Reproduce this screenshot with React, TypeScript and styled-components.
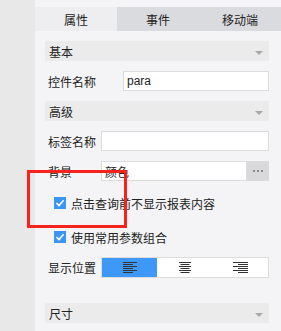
import React, { useState } from 'react';
import styled, { createGlobalStyle } from 'styled-components';

const GlobalStyle = createGlobalStyle`
    html, body {
        margin: 0;
        padding: 0;
        background: #f4f4f6;
    }
    body {
        font-family: "Noto Sans CJK SC", "Liberation Sans", sans-serif;
        font-size: 12px;
        color: #333;
    }
`;

const Page = styled.div`
    position: relative;
    display: flex;
    width: 281px;
    height: 331px;
    overflow: hidden;
`;

const SideStrip = styled.div`
    width: 35px;
    flex: none;
    background: #e8e8e8;
`;

const Panel = styled.div`
    flex: none;
    width: 246px;
    min-width: 0;
    display: flex;
    flex-direction: column;
    padding-top: 7px;
    background: #f4f4f6;
`;

const Tabs = styled.div`
    display: grid;
    grid-template-columns: repeat(3, 1fr);
    height: 24px;
    background: #dadbde;
`;

const Tab = styled.div<{ $active?: boolean }>`
    display: flex;
    align-items: center;
    justify-content: center;
    font-size: 12px;
    color: #222;
    background: ${(p) => (p.$active ? '#eeeef0' : 'transparent')};
    cursor: pointer;
`;

const Content = styled.div`
    display: flex;
    flex-direction: column;
    padding: 0 12px 0 10px;
`;

const SectionHeader = styled.div<{ $top: number }>`
    display: flex;
    align-items: center;
    justify-content: space-between;
    height: 20px;
    margin-top: ${(p) => p.$top}px;
    padding: 0 6px 0 4px;
    background: #ebebeb;
    font-size: 12px;
    color: #222;
`;

const Caret = styled.span`
    width: 0;
    height: 0;
    border-left: 4px solid transparent;
    border-right: 4px solid transparent;
    border-top: 4px solid #a9a9a9;
    margin-top: 3px;
`;

const Row = styled.div<{ $top: number; $label: number }>`
    display: flex;
    align-items: center;
    height: 20px;
    margin-top: ${(p) => p.$top}px;
    & > label {
        flex: none;
        width: ${(p) => p.$label}px;
        padding-left: 3px;
        box-sizing: border-box;
        color: #222;
        white-space: nowrap;
    }
`;

const TextInput = styled.input`
    flex: 1;
    width: 0;
    min-width: 0;
    height: 20px;
    box-sizing: border-box;
    border: 1px solid #dcdcdc;
    background: #fff;
    padding: 0 3px;
    font-family: "Liberation Sans", "Noto Sans CJK SC", sans-serif;
    font-size: 12px;
    color: #222;
    outline: none;
`;

const MoreButton = styled.button`
    flex: none;
    width: 22px;
    height: 20px;
    border: none;
    background: #d9d9db;
    padding: 0;
    display: flex;
    align-items: center;
    justify-content: center;
    gap: 2px;
    & > i {
        width: 2px;
        height: 2px;
        background: #8a8a8a;
    }
`;

const CheckRow = styled.label<{ $top: number }>`
    display: flex;
    align-items: center;
    gap: 5px;
    height: 20px;
    margin-top: ${(p) => p.$top}px;
    padding-left: 9px;
    color: #222;
    cursor: pointer;
`;

const Box = styled.span<{ $on: boolean }>`
    width: 12px;
    height: 12px;
    flex: none;
    background: ${(p) => (p.$on ? '#3b95f5' : '#fff')};
    border: ${(p) => (p.$on ? 'none' : '1px solid #bbb')};
    box-sizing: border-box;
    display: flex;
    align-items: center;
    justify-content: center;
`;

const Segments = styled.div`
    flex: 1;
    min-width: 0;
    display: grid;
    grid-template-columns: repeat(3, 1fr);
    height: 21px;
    box-sizing: border-box;
    border: 1px solid #dcdcdc;
    background: #fff;
`;

const Segment = styled.div<{ $active?: boolean }>`
    display: flex;
    align-items: center;
    justify-content: center;
    background: ${(p) => (p.$active ? '#3d98f8' : '#fff')};
    cursor: pointer;
`;

const Frame = styled.div`
    position: absolute;
    left: 27px;
    top: 170px;
    width: 100px;
    height: 58px;
    box-sizing: border-box;
    border: 3px solid #f5231c;
    pointer-events: none;
`;

function Check({ on }: { on: boolean }) {
    return (
        <Box $on={on}>
            {on && (
                <svg width="10" height="10" viewBox="0 0 10 10">
                    <path d="M1.5 5.2 L4 7.6 L8.6 2.2" fill="none" stroke="#fff" strokeWidth="1.6" />
                </svg>
            )}
        </Box>
    );
}

function AlignIcon({ kind }: { kind: 'left' | 'center' | 'right' }) {
    const long = kind === 'right' ? 15 : kind === 'center' ? 12 : 14;
    const short = kind === 'center' ? 9 : 10;
    const ys = [0, 2, 4, 6, 8, 10];
    return (
        <svg width={long} height="11" viewBox={`0 0 ${long} 11`}>
            {ys.map((y, i) => {
                const w = i % 2 === 0 ? long : short;
                const x = kind === 'left' ? 0 : kind === 'right' ? long - w : (long - w) / 2;
                return <rect key={y} x={x} y={y} width={w} height="1" fill="#333" />;
            })}
        </svg>
    );
}

export default function App() {
    const [tab, setTab] = useState(0);
    const [hideBefore, setHideBefore] = useState(true);
    const [useCommon, setUseCommon] = useState(true);
    const [align, setAlign] = useState<'left' | 'center' | 'right'>('left');

    return (
        <Page>
            <GlobalStyle />
            <SideStrip />
            <Panel>
                <Tabs>
                    {['属性', '事件', '移动端'].map((t, i) => (
                        <Tab key={t} $active={tab === i} onClick={() => setTab(i)}>
                            {t}
                        </Tab>
                    ))}
                </Tabs>
                <Content>
                    <SectionHeader $top={10}>
                        <span>基本</span>
                        <Caret />
                    </SectionHeader>
                    <Row $top={10} $label={78}>
                        <label>控件名称</label>
                        <TextInput defaultValue="para" />
                    </Row>
                    <SectionHeader $top={10}>
                        <span>高级</span>
                        <Caret />
                    </SectionHeader>
                    <Row $top={10} $label={56}>
                        <label>标签名称</label>
                        <TextInput />
                    </Row>
                    <Row $top={10} $label={56}>
                        <label>背景</label>
                        <TextInput defaultValue="颜色" />
                        <MoreButton>
                            <i />
                            <i />
                            <i />
                        </MoreButton>
                    </Row>
                    <CheckRow $top={12} onClick={() => setHideBefore(!hideBefore)}>
                        <Check on={hideBefore} />
                        <span>点击查询前不显示报表内容</span>
                    </CheckRow>
                    <CheckRow $top={14} onClick={() => setUseCommon(!useCommon)}>
                        <Check on={useCommon} />
                        <span>使用常用参数组合</span>
                    </CheckRow>
                    <Row $top={10} $label={56}>
                        <label>显示位置</label>
                        <Segments>
                            {(['left', 'center', 'right'] as const).map((k) => (
                                <Segment key={k} $active={align === k} onClick={() => setAlign(k)}>
                                    <AlignIcon kind={k} />
                                </Segment>
                            ))}
                        </Segments>
                    </Row>
                    <SectionHeader $top={26}>
                        <span>尺寸</span>
                        <Caret />
                    </SectionHeader>
                </Content>
            </Panel>
            <Frame />
        </Page>
    );
}
